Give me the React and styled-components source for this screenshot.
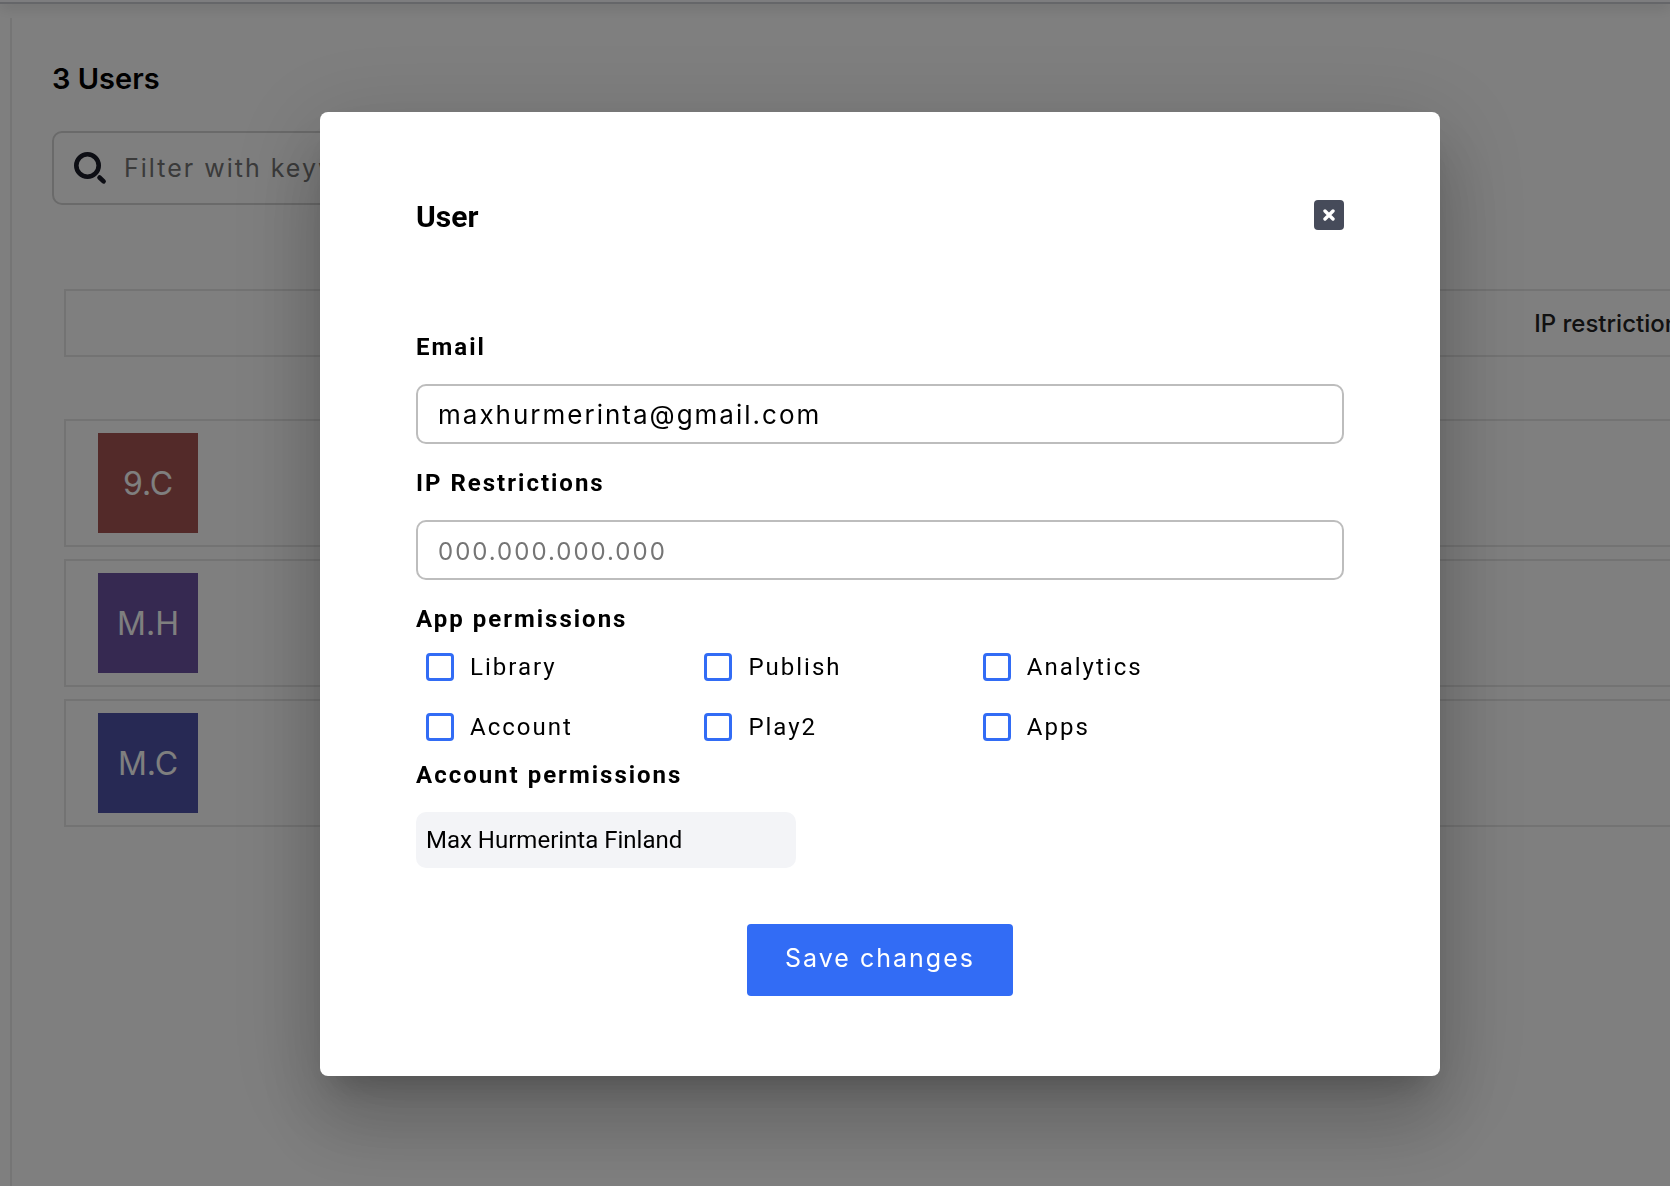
import React, { useState } from 'react'
import styled, { createGlobalStyle } from 'styled-components'

const GlobalStyle = createGlobalStyle`
    *, *::before, *::after {
        box-sizing: border-box;
    }

    body {
        margin: 0;
        background: #fff;
        color: #000;
        font-family: Roboto, sans-serif;
        overflow: hidden;
    }
`

const brandFont = 'Inter, sans-serif'

const Page = styled.div`
    min-height: 100vh;
    display: flex;
    flex-direction: column;
    overflow: hidden;
`

const TopBar = styled.header`
    height: 4px;
    flex-shrink: 0;
    background: #fafbff;
    border-bottom: 2px solid #cbccd2;
    box-shadow: 0 2px 14px rgba(0, 0, 0, 0.28);
`

const Content = styled.main`
    flex-grow: 1;
    margin: 14px 0 0 10px;
    padding: 42px 0 0 40px;
    border-left: 2px solid #ebebeb;
`

const PageTitle = styled.h1`
    margin: 0 0 33px;
    font-family: ${brandFont};
    font-size: 29px;
    font-weight: 600;
    line-height: 38px;
`

const SearchBox = styled.div`
    display: flex;
    align-items: center;
    gap: 16px;
    width: 640px;
    height: 74px;
    padding: 0 20px;
    border: 2px solid #d4d4d4;
    border-radius: 10px;
`

const SearchInput = styled.input`
    flex-grow: 1;
    padding: 0;
    border: 0;
    outline: 0;
    background: transparent;
    font-family: ${brandFont};
    font-size: 25px;
    letter-spacing: 2px;

    &::placeholder {
        color: #757575;
        opacity: 1;
    }
`

const Table = styled.table`
    width: 112%;
    margin: 72px 0 0 12px;
    border-collapse: separate;
    border-spacing: 0 12px;
    table-layout: fixed;

    tbody::before {
        content: '';
        display: block;
        height: 38px;
    }
`

const HeadCell = styled.th`
    width: ${({ $width }) => $width || 'auto'};
    height: 68px;
    padding: 0;
    border: solid #e6e6e6;
    border-width: 2px 0;
    color: #222;
    font-family: ${brandFont};
    font-size: 24px;
    font-weight: 500;
    text-align: left;

    &:first-child {
        border-left-width: 2px;
    }
`

const Cell = styled.td`
    height: 128px;
    padding: 0 0 0 32px;
    border: solid #e6e6e6;
    border-width: 2px 0;

    &:first-child {
        border-left-width: 2px;
    }
`

const Avatar = styled.div`
    display: flex;
    align-items: center;
    justify-content: center;
    width: 100px;
    height: 100px;
    background: ${({ $color }) => $color};
    color: #fff;
    font-family: ${brandFont};
    font-size: 32px;
`

const Backdrop = styled.div`
    position: fixed;
    inset: 0;
    display: flex;
    align-items: flex-start;
    justify-content: center;
    padding: 112px 0 0 90px;
    background: rgba(0, 0, 0, 0.5);
`

const Paper = styled.section`
    width: 100%;
    max-width: 1120px;
    padding: 88px 96px 80px;
    border-radius: 8px;
    background: #fff;
    box-shadow:
        0 22px 30px -14px rgba(0, 0, 0, 0.2),
        0 48px 76px 6px rgba(0, 0, 0, 0.14),
        0 18px 92px 16px rgba(0, 0, 0, 0.12);
`

const DialogHeader = styled.div`
    display: flex;
    align-items: flex-start;
    justify-content: space-between;
    margin-bottom: 95px;
`

const DialogTitle = styled.h2`
    margin: 0;
    font-size: 30px;
    font-weight: 700;
    line-height: 34px;
`

const CloseButton = styled.button`
    display: flex;
    align-items: center;
    justify-content: center;
    width: 30px;
    height: 30px;
    padding: 0;
    border: 0;
    border-radius: 4px;
    background: #464b5a;
    cursor: pointer;
`

const Label = styled.label`
    display: block;
    font-size: 24px;
    font-weight: 700;
    letter-spacing: 2px;
    line-height: 36px;
`

const TextField = styled.input`
    display: block;
    width: 100%;
    height: 60px;
    margin: 19px 0 21px;
    padding: 0 20px;
    border: 2px solid #bdbdbd;
    border-radius: 10px;
    outline: 0;
    background: #fff;
    color: #000;
    font-family: ${brandFont};
    font-size: 26px;
    letter-spacing: 2px;

    &::placeholder {
        color: #757575;
        font-size: 24px;
        opacity: 1;
    }
`

const Permissions = styled.div`
    display: grid;
    grid-template-columns: repeat(3, 30%);
    grid-auto-rows: 60px;
`

const CheckLabel = styled.label`
    display: flex;
    align-items: center;
    gap: 16px;
    padding-left: 10px;
    font-size: 24px;
    letter-spacing: 2px;
    cursor: pointer;
`

const Checkbox = styled.input`
    appearance: none;
    width: 28px;
    height: 28px;
    margin: 0;
    border: 3px solid #326cf5;
    border-radius: 4px;

    &:checked {
        background: #326cf5;
    }
`

const AccountChip = styled.div`
    width: 380px;
    margin: 19px 0 56px;
    padding: 0 10px;
    border-radius: 10px;
    background: #f3f4f7;
    font-size: 24px;
    line-height: 56px;
`

const SaveButton = styled.button`
    display: block;
    min-width: 266px;
    height: 72px;
    margin: 0 auto;
    padding: 0 32px 4px;
    border: 0;
    border-radius: 4px;
    background: #326cf5;
    color: #fff;
    font-family: ${brandFont};
    font-size: 25px;
    letter-spacing: 2px;
    cursor: pointer;
`

const SearchIcon = () => (
    <svg width="34" height="34" viewBox="0 0 34 34" fill="none" stroke="#1a1c28" strokeLinecap="round" aria-hidden="true">
        <circle cx="13.5" cy="14.5" r="11.2" strokeWidth="4.6" />
        <path d="M25.5 26.5L29.6 30.4" strokeWidth="4.6" />
    </svg>
)

const CloseIcon = () => (
    <svg width="12" height="12" viewBox="0 0 12 12" stroke="#fff" strokeWidth="3.4" strokeLinecap="round" aria-hidden="true">
        <path d="M2 2L10 10M10 2L2 10" />
    </svg>
)

const users = [
    { initials: '9.C', color: '#a65452' },
    { initials: 'M.H', color: '#6c52a2' },
    { initials: 'M.C', color: '#4e52a8' },
]

const permissions = ['Library', 'Publish', 'Analytics', 'Account', 'Play2', 'Apps']

const UsersTable = () => (
    <Table>
        <thead>
            <tr>
                <HeadCell />
                <HeadCell $width="342px">IP restrictions</HeadCell>
            </tr>
        </thead>
        <tbody>
            {users.map(({ initials, color }) => (
                <tr key={initials}>
                    <Cell>
                        <Avatar $color={color}>{initials}</Avatar>
                    </Cell>
                    <Cell />
                </tr>
            ))}
        </tbody>
    </Table>
)

const UserDialog = ({ onClose }) => {

    const [email, setEmail] = useState('maxhurmerinta@gmail.com')
    const [ip, setIp] = useState('')

    return (
        <Backdrop>
            <Paper role="dialog" aria-modal="true" aria-labelledby="user-title">
                <DialogHeader>
                    <DialogTitle id="user-title">User</DialogTitle>
                    <CloseButton type="button" aria-label="close" onClick={onClose}>
                        <CloseIcon />
                    </CloseButton>
                </DialogHeader>
                <Label htmlFor="email">Email</Label>
                <TextField
                    id="email"
                    type="text"
                    value={email}
                    onChange={e => setEmail(e.target.value)}
                />
                <Label htmlFor="ip">IP Restrictions</Label>
                <TextField
                    id="ip"
                    type="text"
                    placeholder="000.000.000.000"
                    value={ip}
                    onChange={e => setIp(e.target.value)}
                />
                <Label as="div" id="app-permissions">App permissions</Label>
                <Permissions role="group" aria-labelledby="app-permissions">
                    {permissions.map(name => (
                        <CheckLabel key={name}>
                            <Checkbox type="checkbox" name={name} />
                            {name}
                        </CheckLabel>
                    ))}
                </Permissions>
                <Label as="div">Account permissions</Label>
                <AccountChip>Max Hurmerinta Finland</AccountChip>
                <SaveButton type="button" onClick={onClose}>Save changes</SaveButton>
            </Paper>
        </Backdrop>
    )
}

const App = () => {

    const [open, setOpen] = useState(true)

    const handleClose = () => {
        setOpen(false)
    }

    return (
        <>
            <GlobalStyle />
            <Page>
                <TopBar />
                <Content>
                    <PageTitle>3 Users</PageTitle>
                    <SearchBox>
                        <SearchIcon />
                        <SearchInput
                            type="text"
                            aria-label="Filter users"
                            placeholder="Filter with keywords"
                        />
                    </SearchBox>
                    <UsersTable />
                </Content>
            </Page>
            {open && <UserDialog onClose={handleClose} />}
        </>
    )
}

export default App
